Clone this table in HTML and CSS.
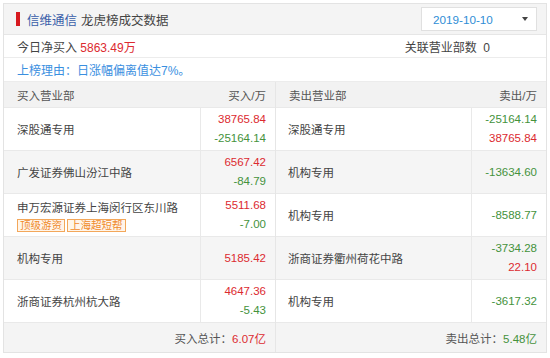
FILE: index.html
```html
<!DOCTYPE html>
<html lang="zh">
<head>
<meta charset="utf-8">
<link rel="stylesheet" href="styles.css">
</head>
<body>
<div class="panel">
  <div class="hd">
    <span class="bar"></span>
    <span class="stock">信维通信</span>
    <span class="title">龙虎榜成交数据</span>
    <div class="date">
      <span class="date-text">2019-10-10</span>
      <span class="caret"></span>
    </div>
  </div>
  <div class="net">
    <span>今日净买入 <span class="red">5863.49万</span></span>
    <span class="assoc">关联营业部数&nbsp;&nbsp;0</span>
  </div>
  <div class="reason">上榜理由：日涨幅偏离值达7%。</div>
  <div class="tables">
    <div class="side">
      <div class="th name">买入营业部</div>
      <div class="th val">买入/万</div>

      <div class="td name">深股通专用</div>
      <div class="td val"><span class="red">38765.84</span><span class="green">-25164.14</span></div>

      <div class="td name alt">广发证券佛山汾江中路</div>
      <div class="td val alt"><span class="red">6567.42</span><span class="green">-84.79</span></div>

      <div class="td name"><span>申万宏源证券上海闵行区东川路</span><span class="tags"><span class="tag">顶级游资</span><span class="tag">上海超短帮</span></span></div>
      <div class="td val"><span class="red">5511.68</span><span class="green">-7.00</span></div>

      <div class="td name alt">机构专用</div>
      <div class="td val alt"><span class="red">5185.42</span></div>

      <div class="td name">浙商证券杭州杭大路</div>
      <div class="td val"><span class="red">4647.36</span><span class="green">-5.43</span></div>

      <div class="total">买入总计：<span class="red">6.07亿</span></div>
    </div>
    <div class="side right">
      <div class="th name">卖出营业部</div>
      <div class="th val">卖出/万</div>

      <div class="td name">深股通专用</div>
      <div class="td val"><span class="green">-25164.14</span><span class="red">38765.84</span></div>

      <div class="td name alt">机构专用</div>
      <div class="td val alt"><span class="green">-13634.60</span></div>

      <div class="td name">机构专用</div>
      <div class="td val"><span class="green">-8588.77</span></div>

      <div class="td name alt">浙商证券衢州荷花中路</div>
      <div class="td val alt"><span class="green">-3734.28</span><span class="red">22.10</span></div>

      <div class="td name">机构专用</div>
      <div class="td val"><span class="green">-3617.32</span></div>

      <div class="total">卖出总计：<span class="green">5.48亿</span></div>
    </div>
  </div>
</div>
</body>
</html>
```
FILE: styles.css
```css
* { box-sizing: border-box; }
html, body { margin: 0; padding: 0; background: #fff; }
body {
  font-family: "Liberation Sans", "Noto Sans CJK SC", sans-serif;
  font-size: 12px;
  color: #444;
}
.panel {
  margin: 3px 3px 0 3px;
  border: 1px solid #e3e3e3;
}
.hd {
  height: 31px;
  background: #f4f4f4;
  border-bottom: 1px solid #e6e6e6;
  display: flex;
  align-items: center;
  padding: 0 9px 0 12px;
}
.bar {
  width: 4px;
  height: 14px;
  background: #d7191f;
  margin-right: 7px;
}
.stock { color: #3a5ea9; font-size: 12.5px; margin-right: 4px; }
.title { color: #444; font-size: 12.5px; }
.date {
  margin-left: auto;
  width: 116px;
  height: 24px;
  background: #fff;
  border: 1px solid #e0e0e0;
  display: flex;
  align-items: center;
  padding: 0 8px 0 11px;
}
.date-text { color: #2f8ed6; font-size: 11.7px; }
.caret {
  margin-left: auto;
  width: 0; height: 0;
  border-left: 3.5px solid transparent;
  border-right: 3.5px solid transparent;
  border-top: 4px solid #444;
}
.net {
  height: 23px;
  border-bottom: 1px solid #ececec;
  display: flex;
  align-items: center;
  justify-content: space-between;
  padding: 0 56px 0 13px;
  color: #444;
}
.assoc { color: #444; }
.reason {
  height: 24px;
  border-bottom: 1px solid #ececec;
  display: flex;
  align-items: center;
  padding-left: 13px;
  color: #3a8fdf;
}
.red { color: #dc2a30; }
.green { color: #44923c; }
.tables {
  display: grid;
  grid-template-columns: 1fr 1fr;
  font-size: 11.5px;
}
.side {
  display: grid;
  grid-template-columns: 1fr 75px;
  grid-template-rows: 25px repeat(5, 43px) 30px;
}
.side.right { border-left: 1px solid #e6e6e6; }
.th {
  background: #f2f2f2;
  display: flex;
  align-items: center;
  color: #555;
}
.th.name { padding-left: 13px; }
.th.val { justify-content: flex-end; padding-right: 9px; }
.td {
  border-top: 1px solid #e9e9e9;
  display: flex;
  flex-direction: column;
  justify-content: center;
}
.td.name { padding-left: 13px; color: #444; }
.td.val {
  border-left: 1px solid #e9e9e9;
  align-items: flex-end;
  padding-right: 9px;
  line-height: 19px;
}
.side.right .td.name { padding-left: 12px; }
.alt { background: #f5f5f5; }
.tags { display: flex; gap: 2px; margin-top: 4px; }
.tag {
  font-size: 10.5px;
  line-height: 11px;
  color: #ef8a2a;
  background: #fff5ea;
  border: 1px solid #f3a75a;
  padding: 0 2px;
}
.total {
  grid-column: 1 / 3;
  background: #f4f4f4;
  border-top: 1px solid #e9e9e9;
  display: flex;
  align-items: center;
  justify-content: flex-end;
  padding-right: 9px;
  color: #555;
}
```
